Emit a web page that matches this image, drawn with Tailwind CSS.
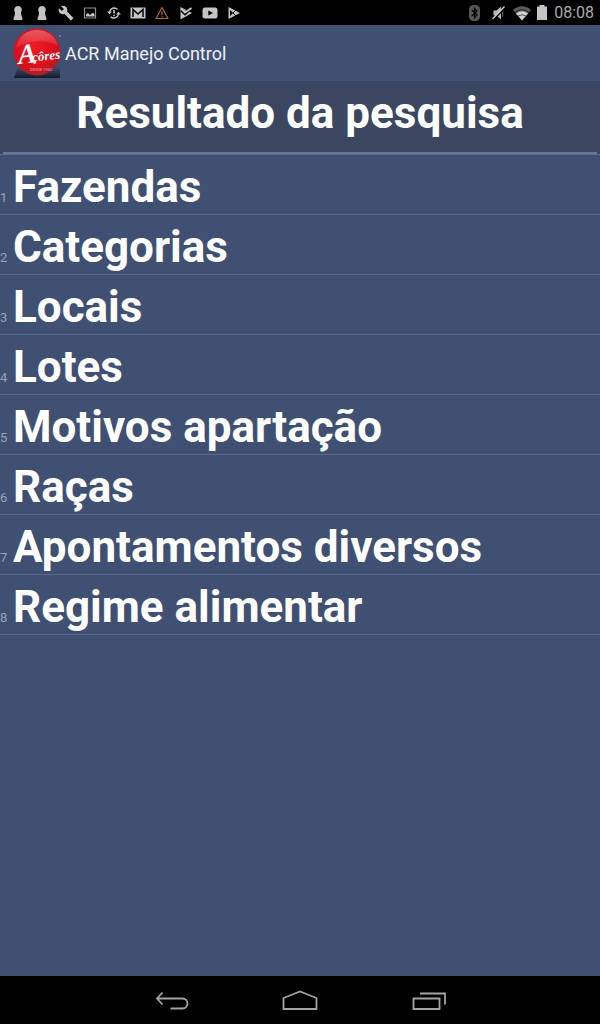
<!DOCTYPE html>
<html lang="pt-BR">
<head>
<meta charset="utf-8">
<meta name="viewport" content="width=device-width, initial-scale=1">
<title>ACR Manejo Control</title>
<script src="https://cdn.jsdelivr.net/npm/@tailwindcss/browser@4"></script>
</head>
<body class="flex min-h-screen flex-col bg-[#405072] font-['Roboto',sans-serif] text-white">
  <!-- Status bar -->
  <div class="flex h-[25px] items-center justify-between bg-black pr-1.5 pl-2.5 text-[#c4c4c4]">
    <div class="flex items-center gap-2">
      <svg class="size-4" viewBox="0 0 16 16" fill="currentColor" aria-hidden="true"><path d="M8 1a4 4 0 0 1 3 6.500L11.500 11.500h.8V15H3.700v-3.500h.8L5 7.500A4 4 0 0 1 8 1z"/></svg>
      <svg class="size-4" viewBox="0 0 16 16" fill="currentColor" aria-hidden="true"><path d="M8 1a4 4 0 0 1 3 6.500L11.500 11.500h.8V15H3.700v-3.500h.8L5 7.500A4 4 0 0 1 8 1z"/></svg>
      <svg class="size-4" viewBox="0 0 24 24" fill="currentColor" aria-hidden="true"><path d="M22.700 19l-9.100-9.100c.9-2.300.4-5-1.500-6.900-2-2-5-2.400-7.400-1.300L9 6 6 9 1.600 4.700C.4 7.100.9 10.100 2.900 12.100c1.900 1.900 4.600 2.400 6.900 1.500l9.100 9.100c.4.4 1 .4 1.400 0l2.300-2.300c.5-.4.5-1.100.1-1.400z"/></svg>
      <svg class="size-4" viewBox="0 0 16 16" aria-hidden="true"><path d="M2.500 3h11v10h-11z" fill="none" stroke="#8e8e8e" stroke-width="1.200"/><path d="M4 11.500V9.500l2-1.500 2 2 3-2.500 1.500 2v2z" fill="currentColor"/></svg>
      <svg class="size-4" viewBox="0 0 16 16" fill="none" stroke="currentColor" stroke-width="1.400" aria-hidden="true"><path d="M3.500 7A4.800 4.800 0 0 1 11.500 4.300M12.500 9A4.800 4.800 0 0 1 4.500 11.700"/><path d="M1 6.500h5L3.500 9.300zM15 9.500h-5l2.500-2.800z" fill="currentColor" stroke="none"/><path d="M8 5v3.600M8 9.800v1.500" stroke-width="1.600"/></svg>
      <svg class="size-4" viewBox="0 0 16 16" aria-hidden="true"><path d="M.5 2.500h15v11H.5z" fill="currentColor"/><path d="M3 12V4.500l5 4.500 5-4.500V12" fill="none" stroke="#000" stroke-width="1.500"/></svg>
      <svg class="size-4" viewBox="0 0 16 16" fill="none" stroke="#a86a28" stroke-width="1.200" stroke-linejoin="round" aria-hidden="true"><path d="M8 2.500l6 11H2z"/><path d="M8 6.200v4M8 11.200v1.200"/></svg>
      <svg class="size-4" viewBox="0 0 16 16" aria-hidden="true"><path d="M2.500 2L14 8 2.500 14.500z" fill="currentColor"/><path d="M3.500 5l3.500 3.500L14 2" fill="none" stroke="#000" stroke-width="3.200"/><path d="M3 3.500l4 4L13.500 3" fill="none" stroke="currentColor" stroke-width="1.900"/></svg>
      <svg class="size-4" viewBox="0 0 16 16" aria-hidden="true"><rect x=".5" y="2.500" width="15" height="11" rx="2.500" fill="currentColor"/><path d="M6.300 5.500v5L11 8z" fill="#000"/></svg>
      <svg class="size-4" viewBox="0 0 16 16" aria-hidden="true"><path d="M2.500 2L14 8 2.500 14z" fill="currentColor"/><path d="M4 5l3.200 3L4 11z" fill="#000"/><path d="M7 8l3-3M7 8l3 3" stroke="#000" stroke-width=".9"/></svg>
    </div>
    <div class="flex items-center">
      <svg class="mr-2.5 h-[18px] w-4" viewBox="0 0 16 18" aria-hidden="true"><rect x="5" y="1" width="11" height="16" rx="4.500" fill="#565656"/><path d="M7.800 6l5.200 5-2.500 2.700V4.300l2.500 2.700-5.200 5" fill="none" stroke="#000" stroke-width="1.200"/></svg>
      <svg class="mr-1.5 size-4" viewBox="0 0 16 16" aria-hidden="true"><path d="M3.500 5.500H6.500L11 1.500v13l-4.500-4H3.500z" fill="#b8b8b8"/><path d="M12.800 5v6.500" stroke="#777" fill="none"/><path d="M3.500 14.500L15.500 2.500" stroke="#000" stroke-width="1.600"/><path d="M2.500 14L14.500 1.500" stroke="currentColor" stroke-width="1.500"/></svg>
      <svg class="mr-1 h-4 w-5" viewBox="0 0 20 16" aria-hidden="true"><path d="M1 5q9-7.500 18 0L10 15.500z" fill="#5c5c5c"/><path d="M4 8.500q6-4.500 12 0L10 15.500z" fill="#d0d0d0"/><path d="M2.800 7.500q7.200-5.500 14.400 0" fill="none" stroke="#000" stroke-width=".6"/><path d="M6 11q4-2.500 8 0" fill="none" stroke="#000" stroke-width=".6"/></svg>
      <svg class="mr-1.5 h-4 w-3" viewBox="0 0 12 16" fill="currentColor" aria-hidden="true"><path d="M3.500 0h5v1.500H11V15H1V1.500h2.500z"/></svg>
      <time class="text-[16px] leading-5 text-[#a9a9a9]">08:08</time>
    </div>
  </div>

  <!-- Action bar -->
  <header class="flex h-14 items-center pl-3">
    <svg class="h-[50px] w-[50px]" viewBox="0 0 50 50" role="img" aria-label="Açôres">
      <defs>
        <radialGradient id="ball" cx=".45" cy=".4" r=".62"><stop offset="0" stop-color="#f01c24"/><stop offset=".65" stop-color="#dd0f1b"/><stop offset="1" stop-color="#a5202c"/></radialGradient>
        <linearGradient id="shine" x1="0" y1="0" x2="0" y2="1"><stop offset="0" stop-color="#fff" stop-opacity=".3"/><stop offset="1" stop-color="#fff" stop-opacity=".06"/></linearGradient>
        <linearGradient id="shade" x1="0" y1="0" x2="0" y2="1"><stop offset="0" stop-color="#1c2236" stop-opacity="0"/><stop offset="1" stop-color="#141928"/></linearGradient>
      </defs>
      <path d="M6 38h42v12H2z" fill="url(#shade)"/>
      <circle cx="25" cy="24" r="23.500" fill="url(#ball)"/>
      <path d="M4 20C6 8 15 2 25 2s19 6 21 16C35 11 16 12 4 20z" fill="url(#shine)"/>
      <text transform="rotate(-6 25 28)" font-family="Liberation Serif, serif" font-style="italic" font-weight="700" fill="#fff"><tspan x="6" y="34" font-size="28">A</tspan><tspan x="20" y="33" font-size="13">çôres</tspan></text>
      <text x="18" y="43" font-family="Roboto, sans-serif" font-size="4" fill="#f3a5a5">DESDE 1952</text>
      <circle cx="48" cy="8" r="1" fill="#8490ab"/>
    </svg>
    <h1 class="pt-0.5 pl-[3px] text-[18px] leading-6 text-[#eef1f6]">ACR Manejo Control</h1>
  </header>

  <main class="flex-1">
    <div class="h-[74px] border-b border-[#5a6987] bg-[#3b4760]">
      <h2 class="mx-[3px] h-[73px] border-b-2 border-[#6d7693] pt-1.5 text-center text-[44px] leading-[52px] font-bold">Resultado da pesquisa</h2>
    </div>
    <ol>
      <li class="flex h-[60px] items-baseline border-b border-[#5a6987] pt-1.5"><span class="w-[13px] shrink-0 text-[13px] text-[#98a3b8]">1</span><a href="#" class="flex-1 text-[44px] leading-[52px] font-bold">Fazendas</a></li>
      <li class="flex h-[60px] items-baseline border-b border-[#5a6987] pt-1.5"><span class="w-[13px] shrink-0 text-[13px] text-[#98a3b8]">2</span><a href="#" class="flex-1 text-[44px] leading-[52px] font-bold">Categorias</a></li>
      <li class="flex h-[60px] items-baseline border-b border-[#5a6987] pt-1.5"><span class="w-[13px] shrink-0 text-[13px] text-[#98a3b8]">3</span><a href="#" class="flex-1 text-[44px] leading-[52px] font-bold">Locais</a></li>
      <li class="flex h-[60px] items-baseline border-b border-[#5a6987] pt-1.5"><span class="w-[13px] shrink-0 text-[13px] text-[#98a3b8]">4</span><a href="#" class="flex-1 text-[44px] leading-[52px] font-bold">Lotes</a></li>
      <li class="flex h-[60px] items-baseline border-b border-[#5a6987] pt-1.5"><span class="w-[13px] shrink-0 text-[13px] text-[#98a3b8]">5</span><a href="#" class="flex-1 text-[44px] leading-[52px] font-bold">Motivos apartação</a></li>
      <li class="flex h-[60px] items-baseline border-b border-[#5a6987] pt-1.5"><span class="w-[13px] shrink-0 text-[13px] text-[#98a3b8]">6</span><a href="#" class="flex-1 text-[44px] leading-[52px] font-bold">Raças</a></li>
      <li class="flex h-[60px] items-baseline border-b border-[#5a6987] pt-1.5"><span class="w-[13px] shrink-0 text-[13px] text-[#98a3b8]">7</span><a href="#" class="flex-1 text-[44px] leading-[52px] font-bold">Apontamentos diversos</a></li>
      <li class="flex h-[60px] items-baseline border-b border-[#5a6987] pt-1.5"><span class="w-[13px] shrink-0 text-[13px] text-[#98a3b8]">8</span><a href="#" class="flex-1 text-[44px] leading-[52px] font-bold">Regime alimentar</a></li>
    </ol>
  </main>

  <!-- System navigation -->
  <nav class="flex h-12 items-center justify-center bg-black text-[#a3a3a3]">
    <button type="button" aria-label="Voltar" class="flex h-12 w-32 items-center justify-center"><svg class="h-6 w-10" viewBox="0 0 40 24" fill="none" stroke="currentColor" stroke-width="1.800"><path d="M10.500 4.500L5 10.500l5.500 6M5 10.500h25.500a5 5 0 0 1 0 10H18.500"/></svg></button>
    <button type="button" aria-label="Início" class="flex h-12 w-32 items-center justify-center"><svg class="h-6 w-10" viewBox="0 0 40 24" fill="none" stroke="currentColor" stroke-width="1.800"><path d="M3.500 21V10L20 3.500 36.500 10v11z"/></svg></button>
    <button type="button" aria-label="Aplicativos recentes" class="flex h-12 w-32 items-center justify-center"><svg class="h-6 w-10" viewBox="0 0 40 24" fill="none" stroke="currentColor" stroke-width="1.800"><path d="M5.500 10.500h26v10.500h-26zM12 5.500h25V16.500"/></svg></button>
  </nav>
</body>
</html>
